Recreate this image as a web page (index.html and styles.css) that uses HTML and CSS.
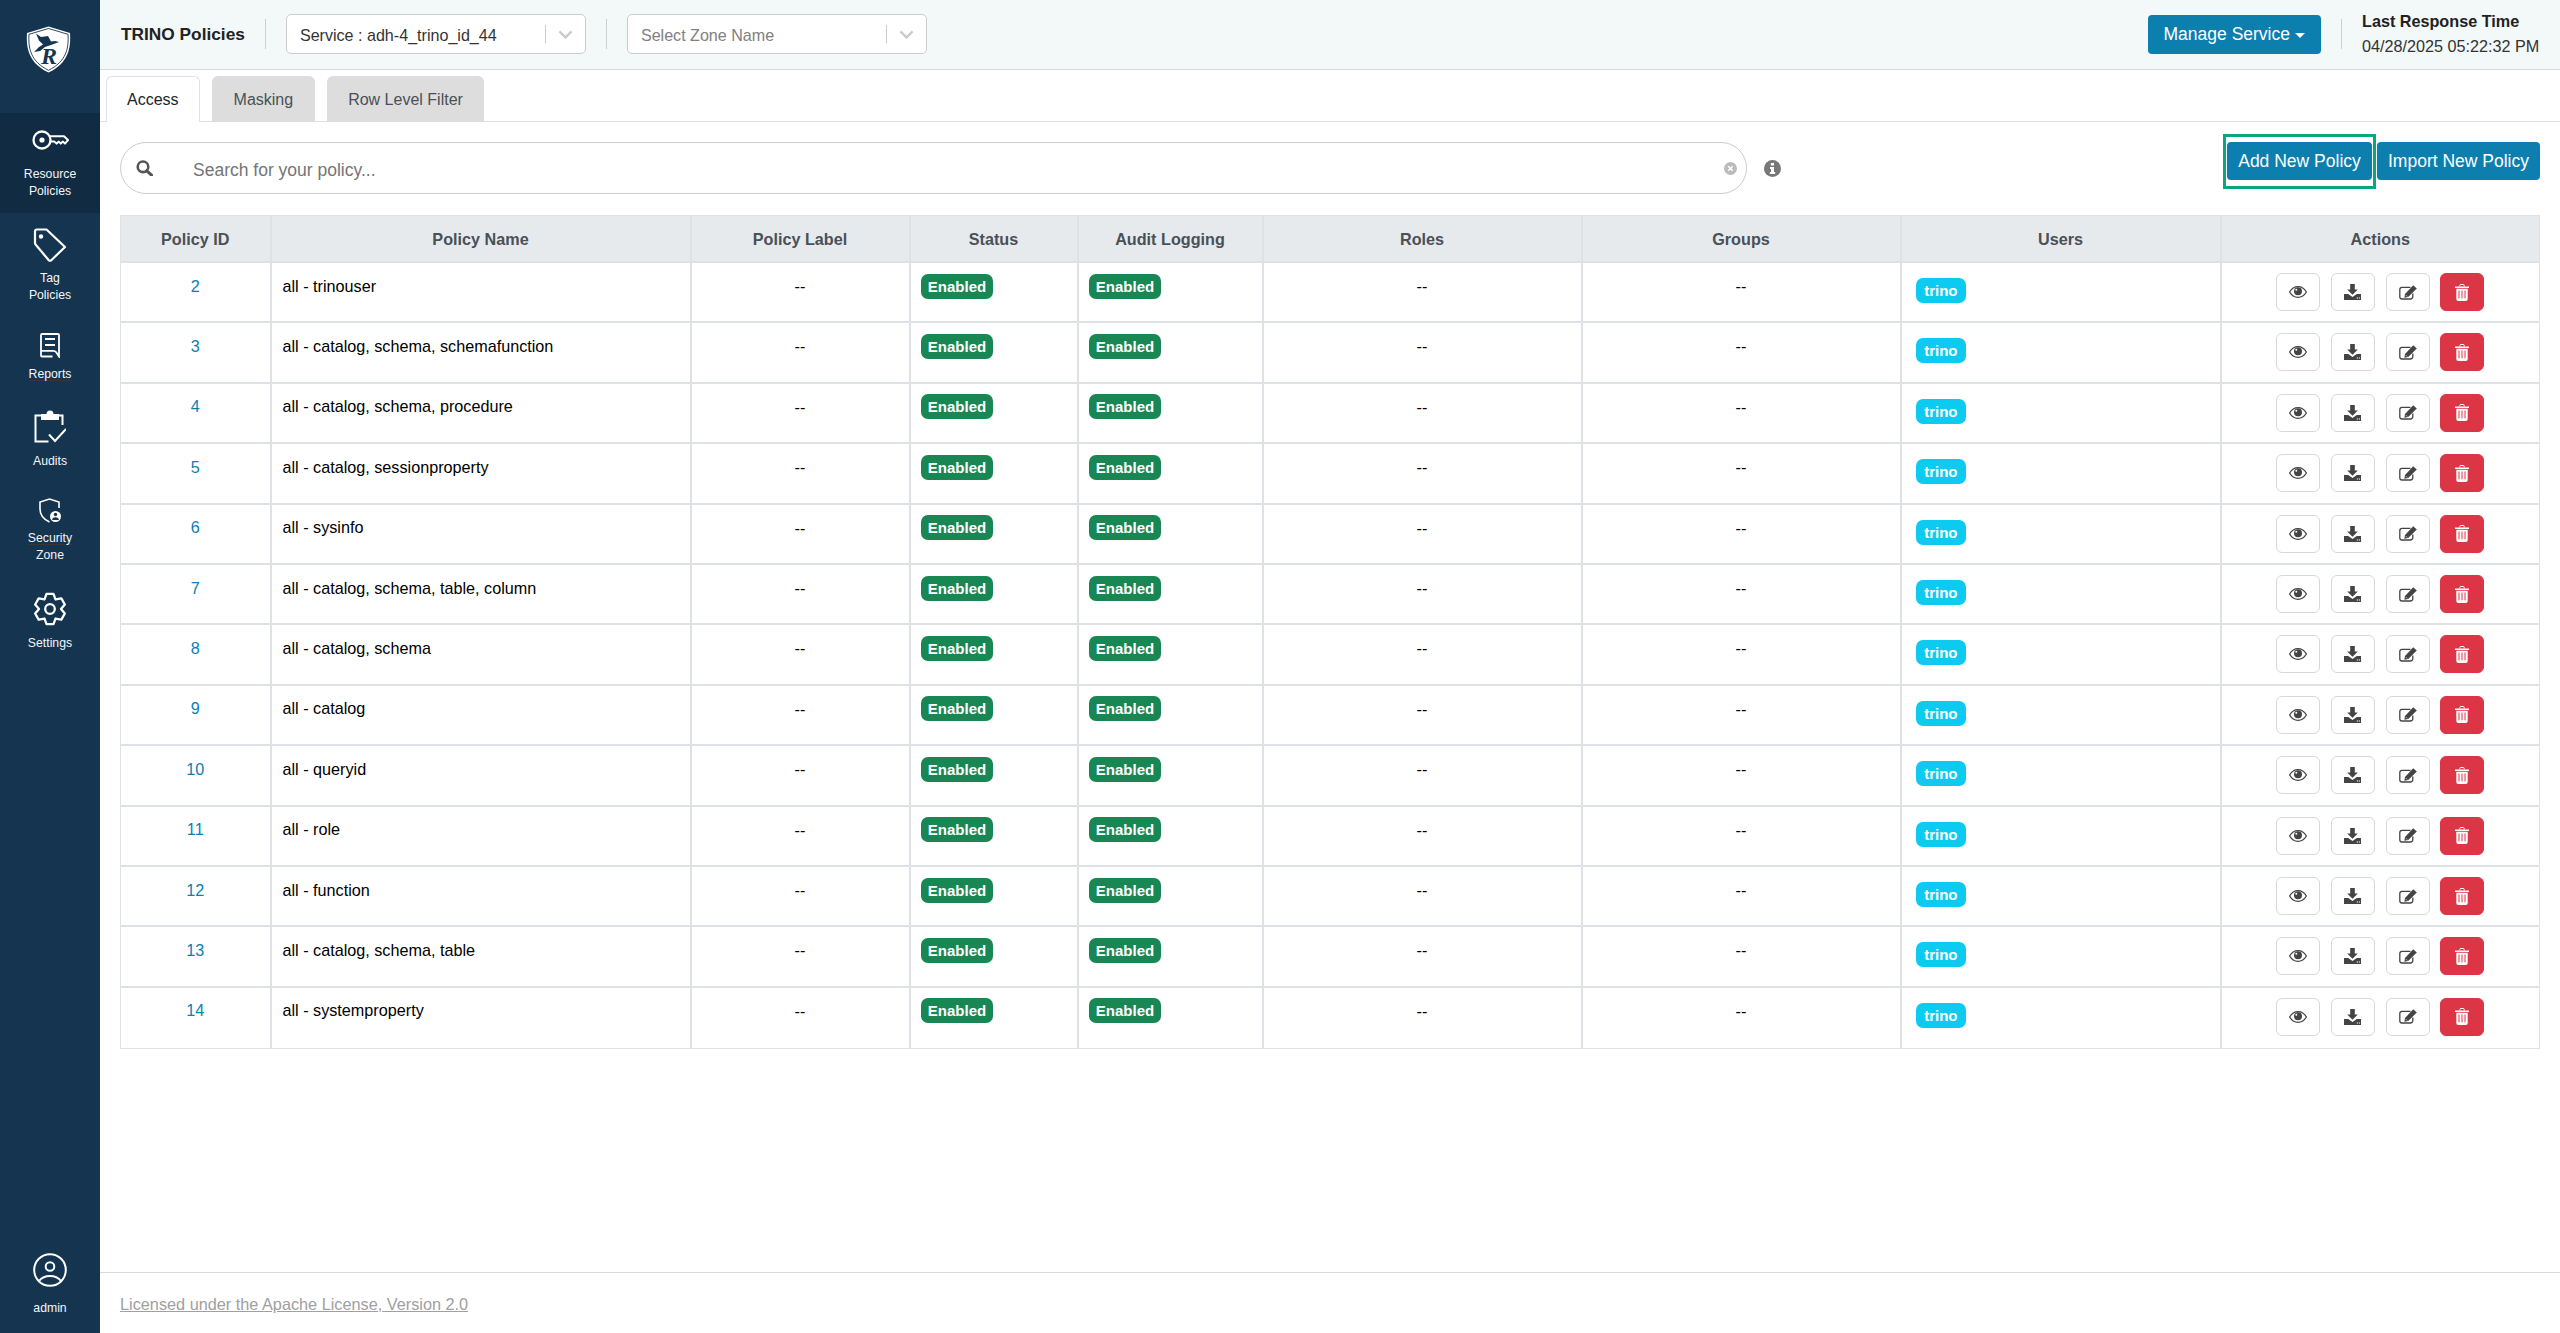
FILE: index.html
```html
<!DOCTYPE html>
<html lang="en">
<head>
<meta charset="utf-8">
<title>TRINO Policies</title>
<link rel="stylesheet" href="styles.css">
</head>
<body>
<svg class="defs" aria-hidden="true">
  <symbol id="i-eye" viewBox="0 0 18 12">
    <path d="M.6 6C2.6 2.6 5.6.7 9 .7s6.4 1.9 8.4 5.3c-2 3.4-5 5.3-8.4 5.3S2.600 9.400.6 6Z" fill="none" stroke="currentColor" stroke-width="1.300"/>
    <circle cx="9" cy="5.300" r="4" fill="currentColor"/>
    <circle cx="7.300" cy="3.800" r="1" fill="#fff"/>
  </symbol>
  <symbol id="i-down" viewBox="0 0 17 16">
    <path d="M6.200 0h4.600v5.500h3L8.500 10.800 3.200 5.500h3Z" fill="currentColor"/>
    <path d="M0 10h4.200l4.300 3 4.300-3H17v6H0Z" fill="currentColor"/>
    <path d="M12.800 13.500h1.200v1h-1.200ZM14.800 13.500H16v1h-1.200Z" fill="#fff"/>
  </symbol>
  <symbol id="i-edit" viewBox="0 0 18 15">
    <path d="M11.500 2.300H3A2.300 2.300 0 0 0 .8 4.600v7.100A2.300 2.300 0 0 0 3 14h8.500a2.300 2.300 0 0 0 2.300-2.300V8.500" fill="none" stroke="currentColor" stroke-width="1.300"/>
    <path d="M14.200.2 17.800 3.500 9.200 12 5.400 12.800 6 9Z" fill="currentColor"/>
    <path d="M7 10.200 8.200 11.500" stroke="#fff" stroke-width=".7"/>
  </symbol>
  <symbol id="i-trash" viewBox="0 0 14 17">
    <path d="M4.800 2.500V1.400Q4.800.5 5.700.5h2.600q.9 0 .9.900v1.100" fill="none" stroke="currentColor" stroke-width="1"/>
    <path d="M0 2.500h14v1.500H0Z" fill="currentColor"/>
    <path d="M1.300 4.700h11.400V15q0 2-2 2H3.300q-2 0-2-2Z" fill="currentColor"/>
    <path d="M4 6.500v7.800M7 6.500v7.800M10 6.500v7.800" stroke="#dc3545" stroke-width="1"/>
  </symbol>
  <symbol id="i-chev" viewBox="0 0 16 9">
    <path d="M1.500 1.200 8 7.600l6.500-6.400" fill="none" stroke="currentColor" stroke-width="2.600"/>
  </symbol>
</svg>

<div class="app">
  <nav class="sidebar">
    <div class="logo-box">
      <svg class="logo" viewBox="0 0 45 47" aria-hidden="true">
        <path d="M22.500 .5 44 7c1 15-1.500 30-21.500 39.500C2.500 37 0 22 1 7Z" fill="#fff"/>
        <path d="M22.500 2.500 42 8.300c.8 14-1.500 27-19.500 36C4.500 35.300 2.200 22.300 3 8.300Z" fill="none" stroke="#14344f" stroke-width=".9"/>
        <path d="M10 7.500 15 11 22 10 25 15.500 29 15 33 16 25 19 19 21 14 25 8 26 13 21 17 18.500 13 14.500Z" fill="#14344f"/>
        <text x="23" y="37.500" class="logo-r">R</text>
      </svg>
    </div>
    <a class="nav-item nav-active nav-resource">
      <svg class="ico-key" viewBox="0 0 37 20" aria-hidden="true">
        <circle cx="10" cy="10" r="8.500" fill="none" stroke="currentColor" stroke-width="2.300"/>
        <circle cx="10" cy="10" r="2.600" fill="currentColor"/>
        <path d="M18 6.200H32L36 10l-3 3.600-2-2-2.200 2-2-2-2.200 2-2.400-2H18.500" fill="none" stroke="currentColor" stroke-width="2" stroke-linejoin="round"/>
      </svg>
      <span class="nav-label">Resource<br>Policies</span>
    </a>
    <a class="nav-item nav-tag">
      <svg class="ico-tag" viewBox="0 0 34 34" aria-hidden="true">
        <path d="M2 3.500Q2 1.500 4 1.500H13.500L32 19 18 32.500Q17 33 16 32.500L3 17Q2 16 2 15Z" fill="none" stroke="currentColor" stroke-width="2.200" stroke-linejoin="round"/>
        <circle cx="8" cy="8.500" r="2.200" fill="currentColor"/>
      </svg>
      <span class="nav-label">Tag<br>Policies</span>
    </a>
    <a class="nav-item nav-reports">
      <svg class="ico-rep" viewBox="0 0 20 25" aria-hidden="true">
        <path d="M12.500 23.500H2Q1 23.500 1 22.500V2Q1 1 2 1H18Q19 1 19 2V23.500L16 19Q15 17.800 13.500 17.800H1" fill="none" stroke="currentColor" stroke-width="1.800"/>
        <path d="M5 6H15M5 12H15" stroke="currentColor" stroke-width="1.800"/>
      </svg>
      <span class="nav-label nav-under">Reports</span>
    </a>
    <a class="nav-item nav-audits">
      <svg class="ico-aud" viewBox="0 0 32 33" aria-hidden="true">
        <path d="M7 5.500H1.500V31.500H14.500M22 5.500H28.500V15" fill="none" stroke="currentColor" stroke-width="2"/>
        <path d="M7 4H12.500A3.500 3.500 0 0 1 19.500 4H25V10H7Z" fill="currentColor"/>
        <path d="M15 24.500 21 31 32 19" fill="none" stroke="currentColor" stroke-width="2"/>
      </svg>
      <span class="nav-label">Audits</span>
    </a>
    <a class="nav-item nav-sec">
      <svg class="ico-sec" viewBox="0 0 23 25" aria-hidden="true">
        <path d="M10.500 24C4 21 1 17 1 11V4L10.500 1 20 4V10" fill="none" stroke="currentColor" stroke-width="1.600"/>
        <circle cx="16.500" cy="18.500" r="5.500" fill="currentColor"/>
        <circle cx="16.500" cy="16.500" r="1.700" fill="#14344f"/>
        <path d="M13.200 22Q13.200 19.300 16.500 19.300T19.800 22Z" fill="#14344f"/>
      </svg>
      <span class="nav-label"><span class="nav-under">Security</span><br>Zone</span>
    </a>
    <a class="nav-item nav-set">
      <svg class="ico-set" viewBox="0 0 34 34" aria-hidden="true">
        <path d="M13.510 1.900H20.490L22.500 7.470 28.340 6.430 31.820 12.470 28 17 31.820 21.530 28.340 27.570 22.500 26.530 20.490 32.100H13.510L11.500 26.530 5.660 27.570 2.180 21.530 6 17 2.180 12.470 5.660 6.430 11.500 7.470Z" fill="none" stroke="currentColor" stroke-width="2.300" stroke-linejoin="round"/>
        <circle cx="17" cy="17" r="4.800" fill="none" stroke="currentColor" stroke-width="2.300"/>
      </svg>
      <span class="nav-label">Settings</span>
    </a>
    <a class="nav-item nav-user">
      <svg class="ico-user" viewBox="0 0 34 34" aria-hidden="true">
        <circle cx="17" cy="17" r="15.800" fill="none" stroke="currentColor" stroke-width="2"/>
        <circle cx="17" cy="13.500" r="4.300" fill="none" stroke="currentColor" stroke-width="2"/>
        <path d="M6 28Q10 23 17 23T28 28" fill="none" stroke="currentColor" stroke-width="2"/>
      </svg>
      <span class="nav-label">admin</span>
    </a>
  </nav>

  <div class="main">
    <header class="topbar">
      <h1 class="page-title">TRINO Policies</h1>
      <span class="vsep"></span>
      <div class="select">
        <span class="select-value">Service : adh-4_trino_id_44</span>
        <span class="select-div"></span>
        <svg class="chev"><use href="#i-chev"/></svg>
      </div>
      <span class="vsep"></span>
      <div class="select">
        <span class="select-value placeholder">Select Zone Name</span>
        <span class="select-div"></span>
        <svg class="chev"><use href="#i-chev"/></svg>
      </div>
      <button class="btn btn-manage">Manage Service<span class="caret"></span></button>
      <span class="vsep vsep-time"></span>
      <div class="resp">
        <div class="resp-title">Last Response Time</div>
        <div class="resp-date">04/28/2025 05:22:32 PM</div>
      </div>
    </header>

    <div class="tabs">
      <a class="tab tab-active">Access</a>
      <a class="tab">Masking</a>
      <a class="tab">Row Level Filter</a>
    </div>

    <div class="content">
      <div class="toolbar">
        <div class="search">
          <svg class="search-ico" viewBox="0 0 17 16" aria-hidden="true">
            <circle cx="7" cy="6.800" r="5.300" fill="none" stroke="currentColor" stroke-width="2.600"/>
            <path d="M10.800 10.800 15.500 15.200" stroke="currentColor" stroke-width="3" stroke-linecap="round"/>
          </svg>
          <span class="search-text">Search for your policy...</span>
          <svg class="search-clear" viewBox="0 0 13 13" aria-hidden="true">
            <circle cx="6.500" cy="6.500" r="6.500" fill="#bbb"/>
            <path d="M4.300 4.300 8.700 8.700M8.700 4.300 4.300 8.700" stroke="#fff" stroke-width="1.600"/>
          </svg>
        </div>
        <svg class="info" viewBox="0 0 17 17" aria-hidden="true">
          <circle cx="8.500" cy="8.500" r="8.500" fill="#777"/>
          <path d="M6.800 3h3.200v2.500H6.800ZM6 7h4v5h1.200v2H5.800v-2H7V9H6Z" fill="#fff"/>
        </svg>
        <div class="actions">
          <div class="highlight"><button class="btn btn-add">Add New Policy</button></div>
          <button class="btn btn-import">Import New Policy</button>
        </div>
      </div>

      <table class="grid">
        <colgroup>
          <col class="c-id"><col class="c-name"><col class="c-label"><col class="c-status"><col class="c-audit"><col class="c-roles"><col class="c-groups"><col class="c-users"><col class="c-acts">
        </colgroup>
        <thead>
          <tr><th>Policy ID</th><th>Policy Name</th><th>Policy Label</th><th>Status</th><th>Audit Logging</th><th>Roles</th><th>Groups</th><th>Users</th><th>Actions</th></tr>
        </thead>
        <tbody>
          <tr><td class="id">2</td><td class="name">all - trinouser</td><td class="dash">--</td><td><span class="badge">Enabled</span></td><td><span class="badge">Enabled</span></td><td class="dash">--</td><td class="dash">--</td><td class="user"><span class="badge badge-info">trino</span></td><td class="acts"><div class="act-row"><button class="ic"><svg class="s-eye"><use href="#i-eye"/></svg></button><button class="ic"><svg class="s-down"><use href="#i-down"/></svg></button><button class="ic"><svg class="s-edit"><use href="#i-edit"/></svg></button><button class="ic ic-del"><svg class="s-trash"><use href="#i-trash"/></svg></button></div></td></tr>
          <tr><td class="id">3</td><td class="name">all - catalog, schema, schemafunction</td><td class="dash">--</td><td><span class="badge">Enabled</span></td><td><span class="badge">Enabled</span></td><td class="dash">--</td><td class="dash">--</td><td class="user"><span class="badge badge-info">trino</span></td><td class="acts"><div class="act-row"><button class="ic"><svg class="s-eye"><use href="#i-eye"/></svg></button><button class="ic"><svg class="s-down"><use href="#i-down"/></svg></button><button class="ic"><svg class="s-edit"><use href="#i-edit"/></svg></button><button class="ic ic-del"><svg class="s-trash"><use href="#i-trash"/></svg></button></div></td></tr>
          <tr><td class="id">4</td><td class="name">all - catalog, schema, procedure</td><td class="dash">--</td><td><span class="badge">Enabled</span></td><td><span class="badge">Enabled</span></td><td class="dash">--</td><td class="dash">--</td><td class="user"><span class="badge badge-info">trino</span></td><td class="acts"><div class="act-row"><button class="ic"><svg class="s-eye"><use href="#i-eye"/></svg></button><button class="ic"><svg class="s-down"><use href="#i-down"/></svg></button><button class="ic"><svg class="s-edit"><use href="#i-edit"/></svg></button><button class="ic ic-del"><svg class="s-trash"><use href="#i-trash"/></svg></button></div></td></tr>
          <tr><td class="id">5</td><td class="name">all - catalog, sessionproperty</td><td class="dash">--</td><td><span class="badge">Enabled</span></td><td><span class="badge">Enabled</span></td><td class="dash">--</td><td class="dash">--</td><td class="user"><span class="badge badge-info">trino</span></td><td class="acts"><div class="act-row"><button class="ic"><svg class="s-eye"><use href="#i-eye"/></svg></button><button class="ic"><svg class="s-down"><use href="#i-down"/></svg></button><button class="ic"><svg class="s-edit"><use href="#i-edit"/></svg></button><button class="ic ic-del"><svg class="s-trash"><use href="#i-trash"/></svg></button></div></td></tr>
          <tr><td class="id">6</td><td class="name">all - sysinfo</td><td class="dash">--</td><td><span class="badge">Enabled</span></td><td><span class="badge">Enabled</span></td><td class="dash">--</td><td class="dash">--</td><td class="user"><span class="badge badge-info">trino</span></td><td class="acts"><div class="act-row"><button class="ic"><svg class="s-eye"><use href="#i-eye"/></svg></button><button class="ic"><svg class="s-down"><use href="#i-down"/></svg></button><button class="ic"><svg class="s-edit"><use href="#i-edit"/></svg></button><button class="ic ic-del"><svg class="s-trash"><use href="#i-trash"/></svg></button></div></td></tr>
          <tr><td class="id">7</td><td class="name">all - catalog, schema, table, column</td><td class="dash">--</td><td><span class="badge">Enabled</span></td><td><span class="badge">Enabled</span></td><td class="dash">--</td><td class="dash">--</td><td class="user"><span class="badge badge-info">trino</span></td><td class="acts"><div class="act-row"><button class="ic"><svg class="s-eye"><use href="#i-eye"/></svg></button><button class="ic"><svg class="s-down"><use href="#i-down"/></svg></button><button class="ic"><svg class="s-edit"><use href="#i-edit"/></svg></button><button class="ic ic-del"><svg class="s-trash"><use href="#i-trash"/></svg></button></div></td></tr>
          <tr><td class="id">8</td><td class="name">all - catalog, schema</td><td class="dash">--</td><td><span class="badge">Enabled</span></td><td><span class="badge">Enabled</span></td><td class="dash">--</td><td class="dash">--</td><td class="user"><span class="badge badge-info">trino</span></td><td class="acts"><div class="act-row"><button class="ic"><svg class="s-eye"><use href="#i-eye"/></svg></button><button class="ic"><svg class="s-down"><use href="#i-down"/></svg></button><button class="ic"><svg class="s-edit"><use href="#i-edit"/></svg></button><button class="ic ic-del"><svg class="s-trash"><use href="#i-trash"/></svg></button></div></td></tr>
          <tr><td class="id">9</td><td class="name">all - catalog</td><td class="dash">--</td><td><span class="badge">Enabled</span></td><td><span class="badge">Enabled</span></td><td class="dash">--</td><td class="dash">--</td><td class="user"><span class="badge badge-info">trino</span></td><td class="acts"><div class="act-row"><button class="ic"><svg class="s-eye"><use href="#i-eye"/></svg></button><button class="ic"><svg class="s-down"><use href="#i-down"/></svg></button><button class="ic"><svg class="s-edit"><use href="#i-edit"/></svg></button><button class="ic ic-del"><svg class="s-trash"><use href="#i-trash"/></svg></button></div></td></tr>
          <tr><td class="id">10</td><td class="name">all - queryid</td><td class="dash">--</td><td><span class="badge">Enabled</span></td><td><span class="badge">Enabled</span></td><td class="dash">--</td><td class="dash">--</td><td class="user"><span class="badge badge-info">trino</span></td><td class="acts"><div class="act-row"><button class="ic"><svg class="s-eye"><use href="#i-eye"/></svg></button><button class="ic"><svg class="s-down"><use href="#i-down"/></svg></button><button class="ic"><svg class="s-edit"><use href="#i-edit"/></svg></button><button class="ic ic-del"><svg class="s-trash"><use href="#i-trash"/></svg></button></div></td></tr>
          <tr><td class="id">11</td><td class="name">all - role</td><td class="dash">--</td><td><span class="badge">Enabled</span></td><td><span class="badge">Enabled</span></td><td class="dash">--</td><td class="dash">--</td><td class="user"><span class="badge badge-info">trino</span></td><td class="acts"><div class="act-row"><button class="ic"><svg class="s-eye"><use href="#i-eye"/></svg></button><button class="ic"><svg class="s-down"><use href="#i-down"/></svg></button><button class="ic"><svg class="s-edit"><use href="#i-edit"/></svg></button><button class="ic ic-del"><svg class="s-trash"><use href="#i-trash"/></svg></button></div></td></tr>
          <tr><td class="id">12</td><td class="name">all - function</td><td class="dash">--</td><td><span class="badge">Enabled</span></td><td><span class="badge">Enabled</span></td><td class="dash">--</td><td class="dash">--</td><td class="user"><span class="badge badge-info">trino</span></td><td class="acts"><div class="act-row"><button class="ic"><svg class="s-eye"><use href="#i-eye"/></svg></button><button class="ic"><svg class="s-down"><use href="#i-down"/></svg></button><button class="ic"><svg class="s-edit"><use href="#i-edit"/></svg></button><button class="ic ic-del"><svg class="s-trash"><use href="#i-trash"/></svg></button></div></td></tr>
          <tr><td class="id">13</td><td class="name">all - catalog, schema, table</td><td class="dash">--</td><td><span class="badge">Enabled</span></td><td><span class="badge">Enabled</span></td><td class="dash">--</td><td class="dash">--</td><td class="user"><span class="badge badge-info">trino</span></td><td class="acts"><div class="act-row"><button class="ic"><svg class="s-eye"><use href="#i-eye"/></svg></button><button class="ic"><svg class="s-down"><use href="#i-down"/></svg></button><button class="ic"><svg class="s-edit"><use href="#i-edit"/></svg></button><button class="ic ic-del"><svg class="s-trash"><use href="#i-trash"/></svg></button></div></td></tr>
          <tr><td class="id">14</td><td class="name">all - systemproperty</td><td class="dash">--</td><td><span class="badge">Enabled</span></td><td><span class="badge">Enabled</span></td><td class="dash">--</td><td class="dash">--</td><td class="user"><span class="badge badge-info">trino</span></td><td class="acts"><div class="act-row"><button class="ic"><svg class="s-eye"><use href="#i-eye"/></svg></button><button class="ic"><svg class="s-down"><use href="#i-down"/></svg></button><button class="ic"><svg class="s-edit"><use href="#i-edit"/></svg></button><button class="ic ic-del"><svg class="s-trash"><use href="#i-trash"/></svg></button></div></td></tr>
        </tbody>
      </table>
    </div>

    <footer class="footer"><a class="license">Licensed under the Apache License, Version 2.0</a></footer>
  </div>
</div>
</body>
</html>
```
FILE: styles.css
```css
* { box-sizing: border-box; }
html, body { margin: 0; height: 100%; overflow: hidden; }
body { font-family: "Liberation Sans", Arial, sans-serif; font-size: 16px; color: #000; background: #fff; }
.defs { display: none; }
.app { display: flex; height: 100vh; }

/* sidebar */
.sidebar { width: 100px; flex: none; display: flex; flex-direction: column; background: #14344f; color: #fff; }
.logo-box { height: 113px; padding: 26px 0 0 26px; }
.logo { display: block; width: 45px; height: 47px; }
.logo-r { font-family: "Liberation Serif", serif; font-weight: 700; font-style: italic; font-size: 24px; text-anchor: middle; fill: #14344f; }
.nav-item { display: flex; flex-direction: column; align-items: center; }
.nav-label { font-size: 12.25px; line-height: 17px; text-align: center; color: #f4f6f8; }
.nav-under { text-decoration: underline; text-decoration-color: #3b3433; text-underline-offset: 2px; }
.nav-active { background: #102b42; }
.nav-resource { height: 100px; padding-top: 17px; }
.nav-resource .nav-label { margin-top: 15.5px; }
.ico-key { width: 37px; height: 20px; display: block; }
.nav-tag { height: 107px; padding-top: 15px; }
.nav-tag .nav-label { margin-top: 8px; }
.ico-tag { width: 34px; height: 34px; display: block; }
.nav-reports { height: 77px; padding-top: 13px; }
.nav-reports .nav-label { margin-top: 8px; }
.ico-rep { width: 20px; height: 25px; display: block; }
.nav-audits { height: 88px; padding-top: 13px; }
.nav-audits .nav-label { margin-top: 10px; }
.ico-aud { width: 32px; height: 33px; display: block; }
.nav-sec { height: 107px; padding-top: 13px; }
.nav-sec .nav-label { margin-top: 7px; }
.ico-sec { width: 23px; height: 25px; display: block; }
.nav-set { padding-top: 0; }
.nav-set .nav-label { margin-top: 9px; }
.ico-set { width: 34px; height: 34px; display: block; }
.nav-user { margin-top: auto; padding-bottom: 16px; }
.nav-user .nav-label { margin-top: 13px; }
.ico-user { width: 34px; height: 34px; display: block; }

/* main column */
.main { flex: 1; min-width: 0; display: flex; flex-direction: column; }
.topbar { height: 70px; flex: none; display: flex; align-items: center; padding: 0 20px 1px 21px; background: #f3f8f9; border-bottom: 1px solid #d6d9db; }
.page-title { margin: 0; font-size: 17.3px; font-weight: 700; color: #222; line-height: 24px; }
.vsep { width: 1px; height: 30px; background: #ccd0d2; margin: 0 20px; flex: none; }
.select { width: 300px; height: 40px; display: flex; align-items: center; padding: 0 12px 0 13px; background: #fff; border: 1px solid #ccc; border-radius: 5px; }
.select-value { flex: 1; color: #333; padding-top: 3px; font-size: 16.1px; }
.placeholder { color: #808080; }
.select-div { width: 1px; height: 18px; background: #ccc; margin-right: 12px; }
.chev { width: 15px; height: 9px; color: #ccc; }
.btn { height: 38px; padding: 0 12px; border: 0; border-radius: 4px; background: #0c7fae; color: #fff; font: 17.5px/38px "Liberation Sans", Arial, sans-serif; white-space: nowrap; cursor: pointer; }
.btn-add { width: 145px; padding: 0; }
.btn-import { width: 163px; padding: 0; }
.btn-manage { height: 39px; margin-left: auto; padding: 0 16px; display: flex; align-items: center; }
.caret { width: 0; height: 0; margin-left: 5px; margin-top: 2px; border-left: 5px solid transparent; border-right: 5px solid transparent; border-top: 5px solid #fff; }
.vsep-time { margin: 0 20px; }
.resp { width: 178px; line-height: 25px; font-size: 16.2px; }
.resp-title { font-weight: 700; color: #222; }
.resp-date { color: #333; }

/* tabs */
.tabs { flex: none; display: flex; gap: 12px; height: 52px; padding: 6px 0 0 5.5px; border-bottom: 1px solid #dee2e6; }
.tab { height: 46px; padding: 0 21px; line-height: 47px; background: #ddd; color: #495057; border-radius: 6px 6px 0 0; }
.tab + .tab { padding: 0 21.5px; }
.tab-active { background: #fff; color: #212529; line-height: 46px; padding: 0 20.5px; border: 1px solid #dee2e6; border-bottom: 0; }

/* toolbar */
.content { flex: 1; min-height: 0; padding: 20px 20px 0; }
.toolbar { display: flex; align-items: flex-start; height: 73px; }
.search { width: 1627px; height: 52px; flex: none; display: flex; align-items: center; padding: 0 9px 0 15px; border: 1px solid #ccc; border-radius: 26px; }
.search-ico { width: 17px; height: 16px; color: #555; }
.search-text { flex: 1; margin-left: 40px; padding-top: 4px; font-size: 17.5px; color: #757575; }
.search-clear { width: 13px; height: 13px; }
.info { width: 17px; height: 17px; margin: 18px 0 0 17px; flex: none; }
.actions { margin-left: auto; display: flex; gap: 5px; }
.highlight { position: relative; }
.highlight::after { content: ""; position: absolute; inset: -8px -4px -9px -4px; border: 3px solid #07a87e; pointer-events: none; }

/* table */
.grid { width: 2420px; table-layout: fixed; border-collapse: separate; border-spacing: 0; border: 1px solid #dee2e6; font-size: 16.2px; }
.c-id { width: 150.5px; }
.c-name { width: 420px; }
.c-label { width: 219px; }
.c-status { width: 168px; }
.c-audit { width: 185px; }
.c-roles { width: 319px; }
.c-groups { width: 319px; }
.c-users { width: 320px; }
.c-acts { width: 317.5px; }
.grid th { height: 47px; padding: 2px 8px 0; background: #e7eaed; color: #495057; font-weight: 700; text-align: center; border-right: 2px solid #dee2e6; border-bottom: 2px solid #dee2e6; }
.grid td { height: 60.42px; padding: 10.5px 0 0 10px; vertical-align: top; line-height: 24px; border-right: 2px solid #dee2e6; border-bottom: 2px solid #dee2e6; }
.grid th:last-child, .grid td:last-child { border-right: 0; }
.grid tbody tr:last-child td { border-bottom: 0; }
.grid td.name { padding-left: 11px; }
.grid td.id { padding-left: 0; text-align: center; color: #0c7fae; }
.grid td.dash { padding-left: 0; padding-top: 11px; text-align: center; }
.grid td.user { padding: 15px 0 0 14px; }
.grid td.acts { padding: 10px 0 0 0; }
.badge { display: inline-block; height: 25px; padding: 0 7.3px; border-radius: 7px; background: #198754; color: #fff; font-size: 15px; font-weight: 700; line-height: 25px; vertical-align: top; }
.badge-info { background: #0dcaf0; padding: 0 8.7px; }
.act-row { display: flex; justify-content: center; gap: 10.6px; }
.ic { width: 44px; height: 38px; padding: 0; display: flex; align-items: center; justify-content: center; background: #fff; border: 1px solid #d8d8d8; border-radius: 6px; color: #444; }
.ic-del { background: #dc3545; border-color: #dc3545; color: #fff; }
.s-eye { width: 18px; height: 12px; }
.s-down { width: 17px; height: 16px; }
.s-edit { width: 18px; height: 15px; }
.s-trash { width: 14px; height: 17px; }

/* footer */
.footer { flex: none; height: 61px; padding: 19px 20px 0; border-top: 1px solid #d6d9dd; }
.license { color: #a0a0a0; text-decoration: underline; line-height: 24px; font-size: 16.27px; }
```
